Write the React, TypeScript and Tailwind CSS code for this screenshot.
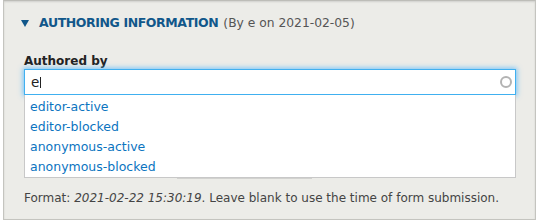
import React from "react";

export default function App() {
  const items = ["editor-active", "editor-blocked", "anonymous-active", "anonymous-blocked"];
  return (
    <div className="w-[537px] h-[222px] bg-white" style={{ fontFamily: '"DejaVu Sans", Verdana, sans-serif' }}>
      <div className="ml-[3px] w-[533px] h-[220px] bg-[#ecece8] border border-[#c4c4bf] border-t-[#bdbdb8] shadow-[inset_0_1px_2px_rgba(0,0,0,0.12)] pt-[13px] pl-[17px] pr-[18px]">
        <div className="flex items-center leading-[18px]">
          <span className="inline-block w-0 h-0 border-l-[4px] border-r-[4px] border-t-[7px] border-l-transparent border-r-transparent border-t-[#11578a] mr-[10px] mt-[1px]" />
          <span className="font-bold text-[12.5px] text-[#11578a] tracking-[-0.4px]">AUTHORING INFORMATION</span>
          <span className="text-[12.3px] text-[#555] ml-[5px]">(By e on 2021-02-05)</span>
        </div>
        <div className="mt-[21px] text-[12px] leading-[16px] font-bold text-[#222] ml-[3px]">Authored by</div>
        <div className="relative ml-[3px] w-[492px]">
          <div className="h-[26px] bg-white border border-[#40b0f0] shadow-[0_0_5px_1px_rgba(64,176,255,0.7)] flex items-center pl-[6px] text-[13.5px] text-[#222]">
            <span>e</span>
            <span className="inline-block w-[1px] h-[11px] bg-[#222] ml-[1px]" />
            <span className="ml-auto mr-[3px] w-[12px] h-[12px] rounded-full border-[2px] border-[#b3b3b3]" />
          </div>
          <div className="absolute left-[153px] top-[109px] w-[135px] h-[1px] bg-[#d2d2cf]" />
          <div className="relative bg-white border border-[#c8c8c8] border-t-0 h-[83px] pt-[2px]">
            {items.map((t) => (
              <div key={t} className="pl-[5px] h-[20px] leading-[20px] text-[12.5px] text-[#0b74bf]">{t}</div>
            ))}
          </div>
        </div>
        <div className="mt-[12px] ml-[3px] text-[12px] leading-[16px] text-[#444] whitespace-nowrap">
          Format: <em>2021-02-22 15:30:19</em>. Leave blank to use the time of form submission.
        </div>
      </div>
    </div>
  );
}
